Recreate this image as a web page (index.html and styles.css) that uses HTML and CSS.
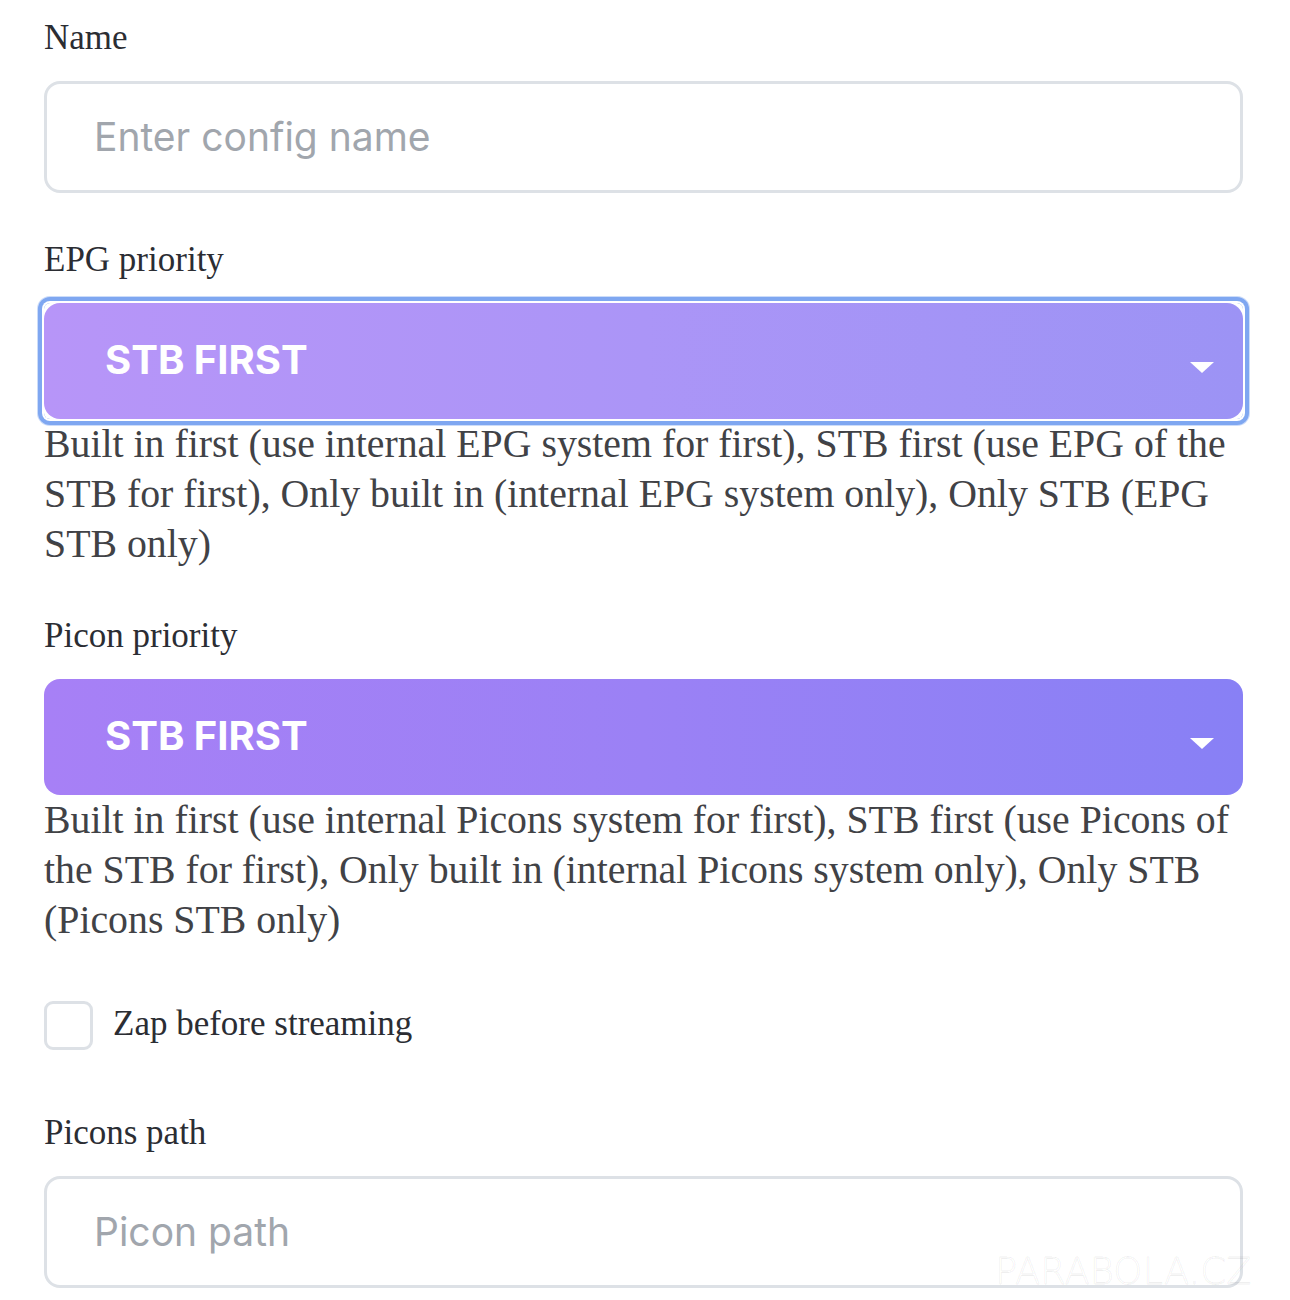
FILE: index.html
```html
<!DOCTYPE html>
<html lang="en">
<head>
<meta charset="utf-8">
<title>Config</title>
<link rel="stylesheet" href="styles.css">
</head>
<body>
<form class="form">
  <div class="group">
    <label class="label" for="name">Name</label>
    <input class="input" id="name" type="text" placeholder="Enter config name">
  </div>

  <div class="group">
    <label class="label">EPG priority</label>
    <div class="select-wrap focused">
      <div class="select select-light">
        <span class="select-text">STB FIRST</span>
        <svg class="arrow" width="24" height="12" viewBox="0 0 24 12"><path d="M0 0 H24 L12 11 Z" fill="#fff"/></svg>
      </div>
    </div>
    <p class="help">Built in first (use internal EPG system for first), STB first (use EPG of the STB for first), Only built in (internal EPG system only), Only STB (EPG STB only)</p>
  </div>

  <div class="group">
    <label class="label">Picon priority</label>
    <div class="select-wrap">
      <div class="select">
        <span class="select-text">STB FIRST</span>
        <svg class="arrow" width="24" height="12" viewBox="0 0 24 12"><path d="M0 0 H24 L12 11 Z" fill="#fff"/></svg>
      </div>
    </div>
    <p class="help">Built in first (use internal Picons system for first), STB first (use Picons of the STB for first), Only built in (internal Picons system only), Only STB (Picons STB only)</p>
  </div>

  <div class="group check-row">
    <span class="checkbox"></span>
    <span class="check-label">Zap before streaming</span>
  </div>

  <div class="group">
    <label class="label" for="picon">Picons path</label>
    <input class="input" id="picon" type="text" placeholder="Picon path">
  </div>
</form>
<div class="watermark">PARABOLA.CZ</div>
</body>
</html>
```

FILE: styles.css
```css
html, body {
  margin: 0;
  padding: 0;
  background: #ffffff;
}

body {
  font-family: "Liberation Serif", "Times New Roman", serif;
  color: #2b2d33;
  position: relative;
  min-height: 1300px;
  overflow: hidden;
}

.form {
  padding: 13px 47px 0 44px;
}

.group {
  margin-bottom: 42px;
}

.label {
  display: block;
  font-size: 35px;
  line-height: 50px;
  margin-bottom: 18px;
  color: #2b2d33;
}

.input {
  display: block;
  box-sizing: border-box;
  width: 100%;
  height: 112px;
  border: 3px solid #dde1e6;
  border-radius: 16px;
  padding: 0 47px 2px;
  font-family: "Inter", "Noto Sans", sans-serif;
  font-size: 39px;
  color: #333;
  background: #fff;
  outline: none;
}

.input::placeholder {
  color: #a1a6ad;
}

.select-wrap {
  border-radius: 6px;
  margin-top: 3px;
}

.select-wrap.focused {
  box-shadow: 0 0 0 2px #fff, 0 0 0 6px #7fa7f1, 0 0 0 7px rgba(127, 167, 241, 0.4);
}

.select {
  height: 116px;
  box-sizing: border-box;
  border-radius: 16px;
  padding: 0 29px 3px 61px;
  display: flex;
  align-items: center;
  justify-content: space-between;
  background: linear-gradient(90deg, #a780f6 0%, #9b81f5 50%, #8880f5 100%);
}

.select-light {
  background: linear-gradient(90deg, #b795f8 0%, #ab95f7 50%, #9c93f5 100%);
}

.select-text {
  font-family: "Inter", "Roboto", sans-serif;
  font-weight: 700;
  font-size: 40px;
  color: #ffffff;
  letter-spacing: 0;
}

.arrow {
  display: block;
  margin-top: 17px;
}

.help {
  margin: 0;
  font-size: 39.8px;
  line-height: 50px;
  color: #414246;
}

.check-row {
  display: flex;
  align-items: center;
  height: 79px;
}

.checkbox {
  box-sizing: border-box;
  width: 49px;
  height: 49px;
  border: 3px solid #dde1e6;
  border-radius: 9px;
  background: #fff;
  margin-right: 20px;
  flex: none;
  margin-top: -2px;
}

.check-label {
  font-size: 35px;
  line-height: 50px;
  color: #2b2d33;
  margin-top: -6px;
}

.watermark {
  position: absolute;
  left: 995px;
  top: 1250px;
  font-family: "DejaVu Sans", sans-serif;
  font-size: 37px;
  font-weight: 200;
  letter-spacing: 0;
  color: transparent;
  -webkit-text-stroke: 1px rgba(0, 0, 0, 0.06);
  pointer-events: none;
  white-space: nowrap;
}
```
